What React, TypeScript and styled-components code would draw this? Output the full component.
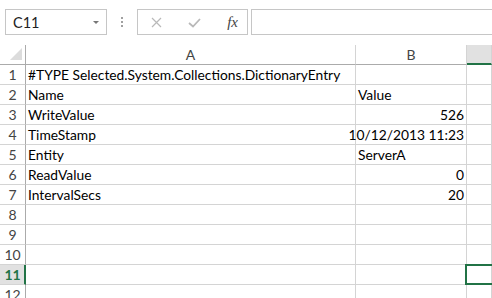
import React from "react";
import styled, { createGlobalStyle } from "styled-components";

const Global = createGlobalStyle`
  html, body { margin: 0; padding: 0; background: #fff; }
  body { font-family: Lato, "Liberation Sans", sans-serif; overflow: hidden; }
`;

const Page = styled.div`
  width: 492px;
  height: 298px;
  overflow: hidden;
  background: #fff;
  display: flex;
  flex-direction: column;
`;

const Toolbar = styled.div`
  flex-shrink: 0;
  height: 45px;
  box-sizing: border-box;
  padding: 9px 0 0 5px;
  display: flex;
  align-items: flex-start;
`;

const NameBox = styled.div`
  width: 102px;
  height: 26px;
  box-sizing: border-box;
  border: 1px solid #c6c6c6;
  display: flex;
  align-items: center;
  justify-content: space-between;
  padding: 0 7px 0 7px;
  font-size: 14.5px;
  color: #222;
`;

const Caret = styled.span`
  width: 0;
  height: 0;
  border-left: 3.5px solid transparent;
  border-right: 3.5px solid transparent;
  border-top: 3.5px solid #777;
  margin-top: 1px;
`;

const Grip = styled.div`
  width: 30px;
  height: 26px;
  display: flex;
  flex-direction: column;
  align-items: center;
  justify-content: center;
  gap: 2px;
`;

const Dot = styled.span`
  width: 2px;
  height: 2px;
  background: #a0a0a0;
`;

const FxButtons = styled.div`
  width: 111px;
  height: 26px;
  box-sizing: border-box;
  border: 1px solid #c6c6c6;
  display: flex;
  align-items: center;
  justify-content: space-between;
  padding: 0 9px 0 13px;
`;

const FxLabel = styled.span`
  font-family: "Liberation Serif", serif;
  font-style: italic;
  font-size: 15px;
  color: #444;
`;

const FormulaInput = styled.div`
  flex: 1;
  height: 26px;
  margin-left: 3px;
  box-sizing: border-box;
  border: 1px solid #c6c6c6;
  border-right: none;
`;

const Sheet = styled.div`
  flex-shrink: 0;
  display: grid;
  grid-template-columns: 26px 330px 111px 1fr;
  grid-auto-rows: 20px;
`;

const Corner = styled.div`
  box-sizing: border-box;
  border-right: 1px solid #ababab;
  border-bottom: 1px solid #ababab;
  display: flex;
  align-items: flex-end;
  justify-content: flex-end;
  padding: 0 3px 4px 0;
`;

const ColHeader = styled.div<{ $active?: boolean }>`
  box-sizing: border-box;
  background: ${(p) => (p.$active ? "#e1e1e1" : "#fff")};
  border-right: 1px solid #d4d4d4;
  border-bottom: ${(p) => (p.$active ? "2px solid #217346" : "1px solid #ababab")};
  display: flex;
  align-items: center;
  justify-content: center;
  font-size: 14px;
  color: #444;
  padding-bottom: ${(p) => (p.$active ? "0" : "1px")};
`;

const RowHeader = styled.div<{ $active?: boolean }>`
  box-sizing: border-box;
  background: ${(p) => (p.$active ? "#e1e1e1" : "#fff")};
  border-right: ${(p) => (p.$active ? "2px solid #217346" : "1px solid #ababab")};
  border-bottom: 1px solid #d4d4d4;
  display: flex;
  align-items: center;
  justify-content: center;
  font-size: 14px;
  font-weight: ${(p) => (p.$active ? 700 : 400)};
  color: ${(p) => (p.$active ? "#217346" : "#444")};
  padding-left: ${(p) => (p.$active ? "1px" : "0")};
`;

const Cell = styled.div<{ $right?: boolean; $selected?: boolean }>`
  position: relative;
  box-sizing: border-box;
  border-right: 1px solid #d4d4d4;
  border-bottom: 1px solid #d4d4d4;
  display: flex;
  align-items: center;
  justify-content: ${(p) => (p.$right ? "flex-end" : "flex-start")};
  padding: 0 2px 0 2px;
  font-size: 13.8px;
  color: #000;
  white-space: nowrap;
  overflow: visible;
  &::after {
    content: "";
    display: ${(p) => (p.$selected ? "block" : "none")};
    position: absolute;
    left: -2px;
    top: -1px;
    right: -4px;
    bottom: -1px;
    border: 2px solid #217346;
  }
`;

const rows: [string, string, boolean][] = [
  ["#TYPE Selected.System.Collections.DictionaryEntry", "", false],
  ["Name", "Value", false],
  ["WriteValue", "526", true],
  ["TimeStamp", "10/12/2013 11:23", true],
  ["Entity", "ServerA", false],
  ["ReadValue", "0", true],
  ["IntervalSecs", "20", true],
  ["", "", false],
  ["", "", false],
  ["", "", false],
  ["", "", false],
  ["", "", false],
];

export default function App() {
  return (
    <Page>
      <Global />
      <Toolbar>
        <NameBox>
          <span>C11</span>
          <Caret />
        </NameBox>
        <Grip>
          <Dot />
          <Dot />
          <Dot />
        </Grip>
        <FxButtons>
          <svg width="11" height="11" viewBox="0 0 11 11">
            <path d="M1 1 L10 10 M10 1 L1 10" stroke="#b9b9b9" strokeWidth="1.2" fill="none" />
          </svg>
          <svg width="13" height="11" viewBox="0 0 13 11">
            <path d="M1 6 L5 9.5 L12 2" stroke="#b9b9b9" strokeWidth="1.8" fill="none" />
          </svg>
          <FxLabel>fx</FxLabel>
        </FxButtons>
        <FormulaInput />
      </Toolbar>
      <Sheet>
        <Corner>
          <svg width="12" height="12" viewBox="0 0 12 12">
            <path d="M12 0 L12 12 L0 12 Z" fill="#dcdcdc" />
          </svg>
        </Corner>
        <ColHeader>A</ColHeader>
        <ColHeader>B</ColHeader>
        <ColHeader $active />
        {rows.map(([a, b, right], i) => (
          <React.Fragment key={i}>
            <RowHeader $active={i === 10}>{i + 1}</RowHeader>
            <Cell>{a}</Cell>
            <Cell $right={right}>{b}</Cell>
            <Cell $selected={i === 10} />
          </React.Fragment>
        ))}
      </Sheet>
    </Page>
  );
}
